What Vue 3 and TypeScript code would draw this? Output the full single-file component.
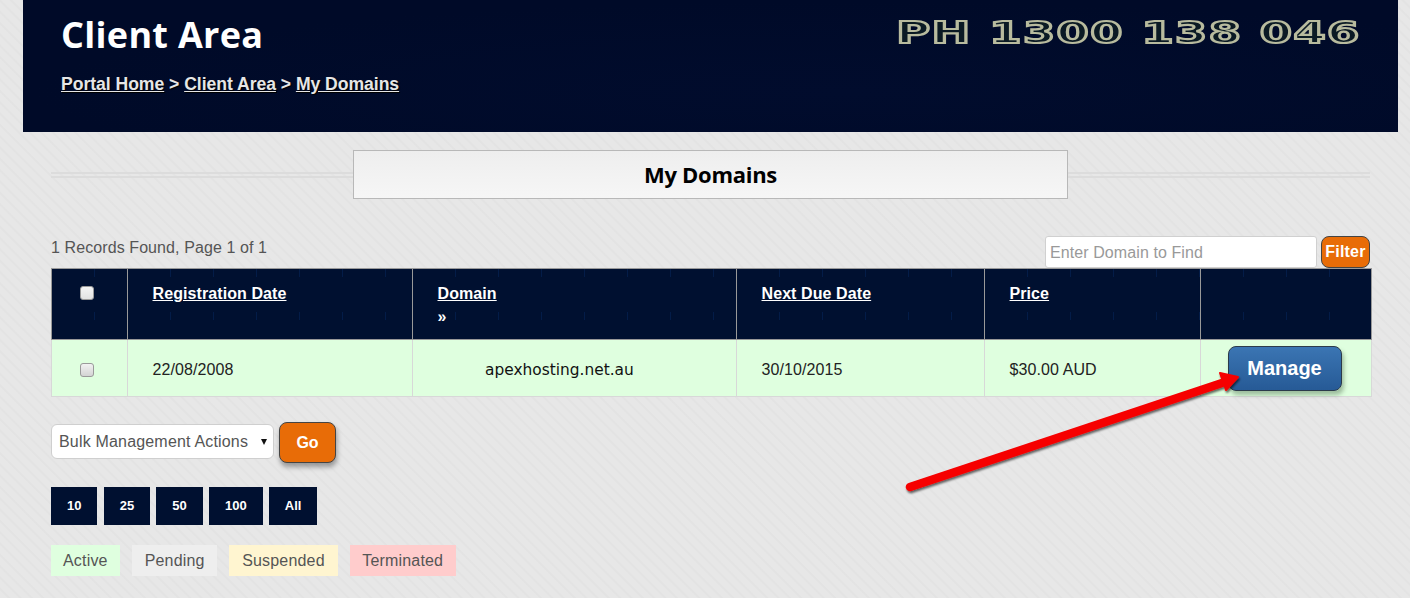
<script setup lang="ts">
const headers = [
  { label: 'Registration Date', sort: false },
  { label: 'Domain', sort: true },
  { label: 'Next Due Date', sort: false },
  { label: 'Price', sort: false },
]
const sizes = ['10', '25', '50', '100', 'All']
const legend = [
  { label: 'Active', cls: 'active' },
  { label: 'Pending', cls: 'pending' },
  { label: 'Suspended', cls: 'suspended' },
  { label: 'Terminated', cls: 'terminated' },
]
</script>

<template>
  <div class="page">
    <header class="banner">
      <div class="banner-left">
        <h1>Client Area</h1>
        <nav class="crumbs">
          <a href="#">Portal Home</a> &gt; <a href="#">Client Area</a> &gt; <a href="#">My Domains</a>
        </nav>
      </div>
      <div class="phone">PH 1300 138 046</div>
    </header>

    <main class="content">
      <div class="title-rule">
        <h2>My Domains</h2>
      </div>

      <div class="toolbar">
        <div class="records">1 Records Found, Page 1 of 1</div>
        <form class="search" @submit.prevent>
          <input type="text" placeholder="Enter Domain to Find" />
          <button class="btn-filter" type="button">Filter</button>
        </form>
      </div>

      <table class="grid">
        <colgroup>
          <col class="c1" /><col class="c2" /><col class="c3" /><col class="c4" /><col class="c5" /><col class="c6" />
        </colgroup>
        <thead>
          <tr>
            <th class="chk"><span class="box head-box"></span></th>
            <th v-for="h in headers" :key="h.label">
              <a href="#">{{ h.label }}</a><span v-if="h.sort" class="sort">»</span>
            </th>
            <th></th>
          </tr>
        </thead>
        <tbody>
          <tr>
            <td class="chk"><span class="box"></span></td>
            <td>22/08/2008</td>
            <td class="domain">apexhosting.net.au</td>
            <td>30/10/2015</td>
            <td>$30.00 AUD</td>
            <td class="action"><button class="btn-manage" type="button">Manage</button></td>
          </tr>
        </tbody>
      </table>

      <div class="bulk">
        <div class="select"><span>Bulk Management Actions</span><i></i></div>
        <button class="btn-go" type="button">Go</button>
      </div>

      <div class="sizes">
        <a v-for="s in sizes" :key="s" href="#">{{ s }}</a>
      </div>

      <div class="legend">
        <span v-for="l in legend" :key="l.label" :class="l.cls">{{ l.label }}</span>
      </div>
    </main>

    <svg class="arrow" width="350" height="130" viewBox="0 0 350 130">
      <defs>
        <filter id="arrow-shadow" x="-5%" y="-15%" width="110%" height="135%">
          <feDropShadow dx="1" dy="2" stdDeviation="1.2" flood-color="#000" flood-opacity="0.6" />
        </filter>
      </defs>
      <g filter="url(#arrow-shadow)">
        <path d="M14 120 L326 16" stroke="#f60000" stroke-width="8.5" stroke-linecap="round" fill="none" />
        <path d="M324 6 L342 10 L330 23 Z" fill="#f60000" stroke="#f60000" stroke-width="2" stroke-linejoin="round" />
      </g>
    </svg>
  </div>
</template>

<style>
html, body { margin: 0; padding: 0; }
</style>

<style scoped>
.page {
  position: relative;
  height: 598px;
  overflow: hidden;
  box-sizing: border-box;
  padding: 0 12px 0 23px;
  font-family: "Liberation Sans", Arial, sans-serif;
  background-color: #e6e6e6;
  background-image: repeating-linear-gradient(45deg, #e7e7e7 0 5px, #e3e3e3 6px 7px, #e7e7e7 8px);
}
.banner {
  height: 132px;
  box-sizing: border-box;
  padding: 0 37px 0 38px;
  display: flex;
  justify-content: space-between;
  align-items: flex-start;
  background: radial-gradient(ellipse at 60% 70%, #010c2d 0%, #000a28 70%);
}
h1 {
  margin: 12px 0 0;
  font: 700 36px/46px "Open Sans", sans-serif;
  letter-spacing: 0.3px;
  color: #fff;
}
.crumbs {
  margin-top: 14px;
  font-size: 17.6px;
  line-height: 24px;
  letter-spacing: -0.04px;
  font-weight: 700;
  color: #e6e6e6;
  text-shadow: 1px 1px 1px #000;
}
.crumbs a { color: #e6e6e6; }
.phone {
  margin-top: 13px;
  font: 700 31px/38px "DejaVu Sans", sans-serif;
  letter-spacing: 1px;
  color: #0b1a24;
  -webkit-text-stroke: 2.2px #b8bb9e;
  white-space: nowrap;
  filter: blur(0.5px);
  transform: scaleX(1.49);
  transform-origin: right center;
}
.content {
  padding: 18px 28px 0;
  font-size: 16px;
  letter-spacing: 0.09px;
  color: #555;
}
.title-rule {
  display: flex;
  justify-content: center;
  background:
    linear-gradient(#dcdcdc, #dcdcdc) 0 22px / 100% 2px no-repeat,
    linear-gradient(#dcdcdc, #dcdcdc) 0 26px / 100% 2px no-repeat;
}
h2 {
  margin: 0;
  width: 713px;
  height: 47px;
  font: 700 22px/47px "Open Sans", sans-serif;
  letter-spacing: -0.3px;
  color: #000;
  text-align: center;
  border: 1px solid #b8b8b8;
  background: linear-gradient(#eeeeee, #f6f6f6);
}
.toolbar {
  display: flex;
  justify-content: space-between;
  align-items: flex-start;
  height: 69px;
  margin-top: 37px;
}
.records { line-height: 24px; }
.search { display: flex; gap: 4px; }
.search input {
  width: 272px;
  height: 32px;
  box-sizing: border-box;
  padding: 2px 4px 0;
  font: 16px "Liberation Sans", Arial, sans-serif;
  letter-spacing: 0.09px;
  border: 1px solid #d0d0d0;
  border-radius: 3px;
  background: #fff;
}
.search input::placeholder { color: #999; opacity: 1; }
.btn-filter {
  width: 49px;
  height: 32px;
  padding: 0;
  font: 700 16px "Liberation Sans", Arial, sans-serif;
  letter-spacing: 0.2px;
  color: #fff;
  background: #e86c07;
  border: 1px solid #444;
  border-radius: 8px;
}
.grid {
  width: 1320px;
  table-layout: fixed;
  border-collapse: collapse;
  margin-top: -37px;
  font-size: 16px;
}
.c1 { width: 76px; }
.c2 { width: 285px; }
.c3 { width: 324px; }
.c4 { width: 248px; }
.c5 { width: 216px; }
.c6 { width: 171px; }
thead th {
  height: 71px;
  box-sizing: border-box;
  padding: 13px 24.5px 0;
  vertical-align: top;
  text-align: left;
  line-height: 24px;
  font-weight: 700;
  border: 1px solid #999;
  background-color: #001030;
  background-image: url("data:image/svg+xml,%3Csvg xmlns='http://www.w3.org/2000/svg' width='43' height='43'%3E%3Cpath d='M41 0h1v7h-1z' fill='%23031c48'/%3E%3C/svg%3E");
}
thead th a { color: #fff; }
.sort { display: block; color: #fff; line-height: 24px; margin-top: -1px; }
tbody td {
  height: 57px;
  box-sizing: border-box;
  padding: 3px 24.5px 0;
  color: #222;
  background: #dfffdf;
  border: 1px solid #d8d8d8;
}
thead th.chk { padding: 11px 5px 0 0; text-align: center; }
tbody td.chk { padding: 3px 5px 0 0; text-align: center; }
.box {
  display: inline-block;
  width: 12px;
  height: 12px;
  vertical-align: middle;
  border: 1px solid #9a9a9a;
  border-radius: 3px;
  background: linear-gradient(#f2f2f2, #d4d4d4);
}
.head-box { background: linear-gradient(#f4f4f4, #e2e2e2); }
tbody td.domain {
  padding-left: 72px;
  font-family: "DejaVu Sans", sans-serif;
  font-size: 15.4px;
  letter-spacing: 0;
  color: #111;
}
tbody td.action { padding: 1px 3px 0 0; text-align: center; }
.btn-manage {
  width: 114px;
  height: 45px;
  padding: 0;
  font: 700 20px "Liberation Sans", Arial, sans-serif;
  color: #fff;
  background: linear-gradient(#3b75b3, #265a96);
  border: 1px solid #2c3a4a;
  border-radius: 8px;
  box-shadow: 2px 4px 4px rgba(60, 90, 60, 0.4);
}
.bulk {
  display: flex;
  align-items: flex-start;
  gap: 5px;
  margin-top: 25px;
}
.select {
  width: 223px;
  height: 35px;
  margin-top: 2px;
  box-sizing: border-box;
  padding: 0 6px 0 7px;
  display: flex;
  align-items: center;
  justify-content: space-between;
  border: 1px solid #cfcfcf;
  border-radius: 6px;
  background: #fff;
  white-space: nowrap;
  letter-spacing: 0.18px;
}
.select i {
  width: 0;
  height: 0;
  border-style: solid;
  border-width: 6px 3px 0;
  border-color: #111 transparent transparent;
}
.btn-go {
  width: 57px;
  height: 41px;
  padding: 0;
  font: 700 16px "Liberation Sans", Arial, sans-serif;
  color: #fff;
  background: #e86c07;
  border: 1px solid #444;
  border-radius: 8px;
  box-shadow: 1px 4px 5px rgba(0, 0, 0, 0.35);
}
.sizes {
  display: flex;
  gap: 6.2px;
  margin-top: 24px;
}
.sizes a {
  height: 38px;
  box-sizing: border-box;
  padding: 0 16px;
  line-height: 38px;
  font-size: 13px;
  letter-spacing: 0;
  font-weight: 700;
  color: #fff;
  text-decoration: none;
  background: #001030;
}
.legend {
  display: flex;
  gap: 12px;
  margin-top: 20px;
  letter-spacing: 0.18px;
}
.legend span {
  height: 31px;
  box-sizing: border-box;
  padding: 0 12.5px;
  line-height: 31px;
}
.legend .active { padding: 0 12px; background: #dfffdf; }
.legend .pending { padding: 0 12.5px 0 13px; background: #eeeeee; }
.legend .suspended { padding: 0 13px; background: #fff5d0; }
.legend .terminated { padding-right: 13px; background: #ffcccc; }
.arrow {
  position: absolute;
  left: 896px;
  top: 367px;
  pointer-events: none;
}
</style>
